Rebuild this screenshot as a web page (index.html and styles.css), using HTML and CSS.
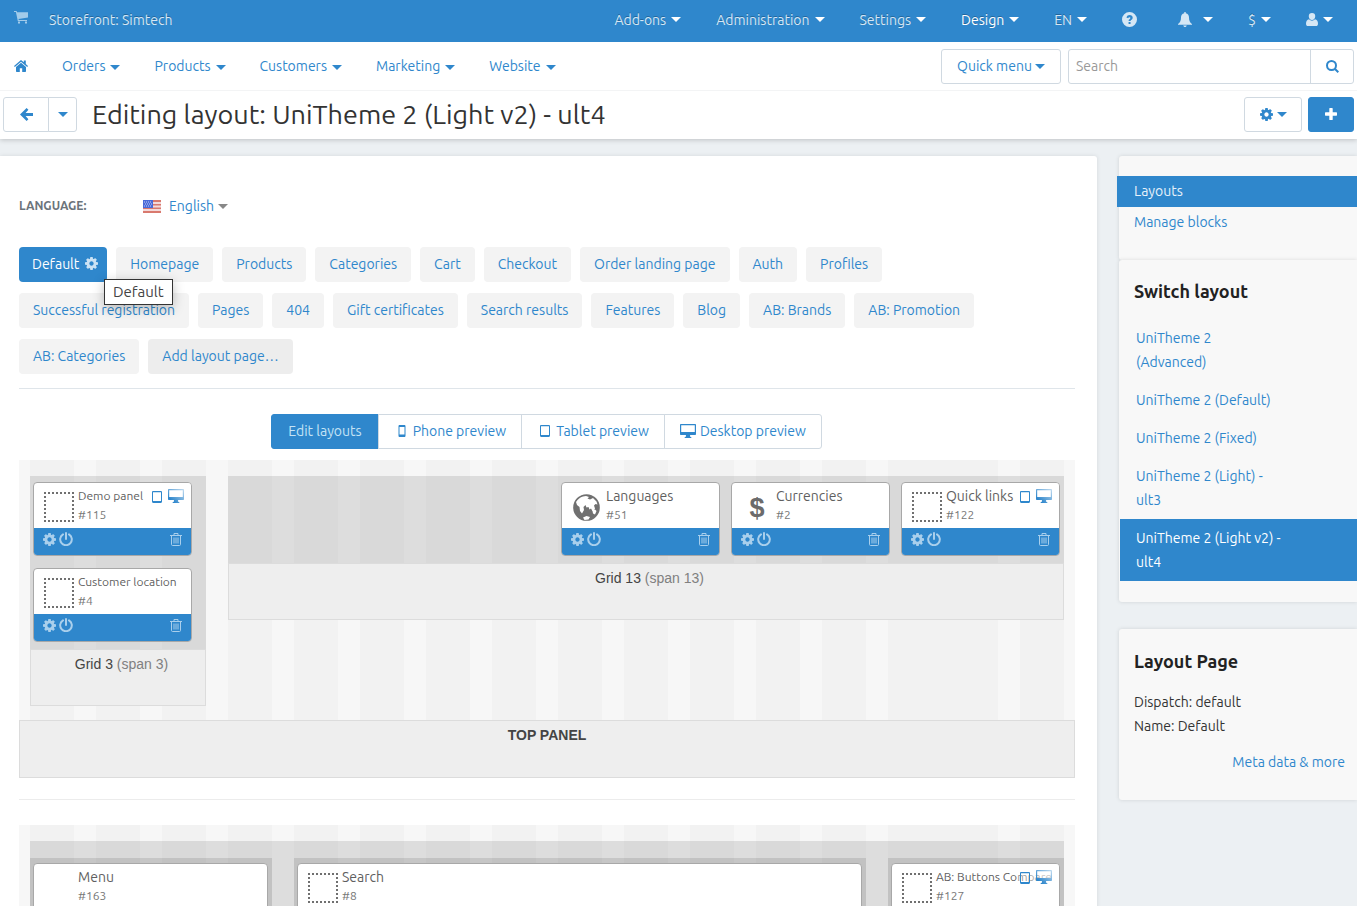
FILE: index.html
```html
<!DOCTYPE html>
<html lang="en">
<head>
<meta charset="utf-8">
<title>Editing layout: UniTheme 2 (Light v2) - ult4</title>
<link rel="stylesheet" href="styles.css">
</head>
<body>
<svg class="sprite" aria-hidden="true">
  <linearGradient id="shine" x1="0" y1="1" x2="1" y2="0"><stop offset=".2" stop-color="#2f87cc"/><stop offset="1" stop-color="#c3dcf0"/></linearGradient>
  <symbol id="cog" viewBox="128 128 1536 1536"><path d="M1152 896q0-106-75-181t-181-75-181 75-75 181 75 181 181 75 181-75 75-181zm512-109v222q0 12-8 23t-20 13l-185 28q-19 54-39 91 35 50 107 138 10 12 10 25t-9 23q-27 37-99 108t-94 71q-12 0-26-9l-138-108q-44 23-91 38-16 136-29 186-7 28-36 28h-222q-14 0-24.500-8.500t-11.500-21.500l-28-184q-49-16-90-37l-141 107q-10 9-25 9-14 0-25-11-126-114-165-168-7-10-7-23 0-12 8-23 15-21 51-66.500t54-70.500q-27-50-41-99l-183-27q-13-2-21-12.500t-8-23.500v-222q0-12 8-23t19-13l186-28q14-46 39-92-40-57-107-138-10-12-10-24 0-10 9-23 26-36 98.500-107.500t94.500-71.500q13 0 26 10l138 107q44-23 91-38 16-136 29-186 7-28 36-28h222q14 0 24.500 8.500t11.500 21.500l28 184q49 16 90 37l142-107q9-9 24-9 13 0 25 10 129 119 165 170 7 8 7 22 0 12-8 23-15 21-51 66.500t-54 70.500q26 50 41 98l183 28q13 2 21 12.500t8 23.500z"/></symbol>
  <symbol id="cart" viewBox="0 0 14 13"><path d="M0 0h2.600l.5 1.200H14v5.300L4.500 8l.3 1H13v1H3.800L1.900 1H0zM4 10.600h2v2H4zM11 10.600h2v2h-2z"/></symbol>
  <symbol id="help" viewBox="0 0 16 16"><path fill-rule="evenodd" d="M8 0a8 8 0 1 1 0 16A8 8 0 0 1 8 0zM4.700 5.800l1.800.9C6.800 6 7.300 5.500 8 5.500c.6 0 1 .3 1 .8 0 1-2 1.200-2 3.200h2.100c0-1.200 2.300-1.400 2.300-3.500C11.400 4.200 10 3.200 8.200 3.200 6.600 3.200 5.300 4.100 4.700 5.800zM7 10.600v2.100h2.100v-2.100z"/></symbol>
  <symbol id="bell" viewBox="0 0 14 15"><path d="M6.300 0h1.400v1.200C10 1.600 11 3.300 11 5.500c0 3.500 1.100 5.200 3 6.500v.8H0V12c1.900-1.300 3-3 3-6.500 0-2.200 1-3.900 3.300-4.300zM5.200 13.500h3.600c-.2.900-.9 1.500-1.800 1.500s-1.600-.6-1.800-1.500z"/></symbol>
  <symbol id="user" viewBox="0 0 12 13"><path d="M6 0a3.200 3.200 0 0 1 3.200 3.400C9.200 5.300 7.800 7 6 7S2.800 5.300 2.800 3.400A3.200 3.200 0 0 1 6 0zM3 6.300c1.600 1.900 4.400 1.900 6 0 2 .3 3 2 3 4.400 0 1.400-.8 2.300-2 2.300H2c-1.200 0-2-.9-2-2.300 0-2.400 1-4.100 3-4.400z"/></symbol>
  <symbol id="home" viewBox="0 0 14 12"><path d="M7 2.700L12 7v4.300c0 .4-.3.700-.7.700H8.200V8.300H5.800V12H2.700c-.4 0-.7-.3-.7-.7V7zM7 0l2.800 2.300V.6h2v3.500L14 6l-.8.900L7 1.700.8 6.900 0 6z"/></symbol>
  <symbol id="left" viewBox="0 0 13 13"><path d="M6.600 0l1.800 1.800L5.600 5H13v3H5.600l2.800 3.200L6.600 13 0 6.500z"/></symbol>
  <symbol id="search" viewBox="0 0 13 13"><path fill="none" stroke="currentColor" stroke-width="2" d="M5.500 1a4.500 4.500 0 1 1 0 9 4.500 4.500 0 0 1 0-9zM8.800 8.800l3.500 3.500"/></symbol>
  <symbol id="plus" viewBox="0 0 12 12"><path d="M4.300.6c0-.4.200-.6.600-.6h2.200c.4 0 .6.200.6.600v3.700h3.700c.4 0 .6.200.6.600v2.200c0 .4-.2.600-.6.600H7.700v3.700c0 .4-.2.600-.6.600H4.900c-.4 0-.6-.2-.6-.6V7.700H.6c-.4 0-.6-.2-.6-.6V4.900c0-.4.2-.6.600-.6h3.700z"/></symbol>
  <symbol id="phone" viewBox="0 0 8 12"><path fill-rule="evenodd" d="M1.500 0h5C7 0 7.500.5 7.500 1v10c0 .5-.5 1-1 1h-5c-.5 0-1-.5-1-1V1c0-.5.5-1 1-1zM1.500 2v7.500h5V2z"/></symbol>
  <symbol id="tablet" viewBox="0 0 10 12"><path fill-rule="evenodd" d="M1.200 0h7.600C9.500 0 10 .5 10 1.200v9.600c0 .7-.5 1.200-1.200 1.200H1.200C.5 12 0 11.500 0 10.800V1.200C0 .5.500 0 1.200 0zM1 1.200V10h8V1.200z"/></symbol>
  <symbol id="desktop" viewBox="0 0 16 14"><path fill-rule="evenodd" d="M1 0h14c.6 0 1 .4 1 1v9c0 .6-.4 1-1 1h-5l.3 2h1v1H4.700v-1h1L6 11H1c-.6 0-1-.4-1-1V1c0-.6.400-1 1-1zM1.200 1.200v6.900h13.600V1.200z"/></symbol>
  <symbol id="power" viewBox="0 0 14 14"><path fill="none" stroke="currentColor" stroke-width="2" stroke-linecap="round" d="M4 2.400a5.800 5.800 0 1 0 6 0M7 1v6"/></symbol>
  <symbol id="trash" viewBox="0 0 12 13"><path fill="none" stroke="currentColor" d="M0 2.500h12M4 2.500v-2h4v2M1.500 2.500v9c0 .6.400 1 1 1h7c.6 0 1-.4 1-1v-9M4 4.500v6M6 4.500v6M8 4.500v6"/></symbol>
  <symbol id="frame" viewBox="0 0 30 30"><path fill="none" stroke="currentColor" stroke-width="2" stroke-dasharray="2 2" shape-rendering="crispEdges" d="M0 1h30M0 29h30M1 0v30M29 0v30"/></symbol>
  <symbol id="globe" viewBox="0 0 27 27"><circle cx="13.500" cy="13.500" r="13.300"/><path fill="#fff" d="M3 8c2-3 4-4.500 7-5.500l3-.5 3 1-1.500 1.500 2.500 1 3-1.500 3.500 3.500 1 3-2-.5-1.500 1.500 1 3-2 3.500-2-3.500-1.500 1-1-2.500-2 .5-1-2.500-2 2 .5 3-2 3.500-2-2.500-.5-4L4 11zM19.500 17l2.500-1.500 1.500 1.500-1.500 3.500-2-1zM10 23.500l3.500-1.500 3.500 1-1.500 2.500-4 .5z"/></symbol>
  <symbol id="flag" viewBox="0 0 18 13"><path fill="#f3dada" d="M0 0h18v13H0z"/><path fill="#d9796e" d="M0 0h18v2H0zM0 4h18v1.500H0zM0 7.500h18V9H0zM0 11h18v2H0z"/><path fill="#4a6ad8" d="M0 0h10v8H0z"/><path stroke="#c5cff5" stroke-dasharray="1 1" d="M1 2h8M2 4h7M1 6h8"/></symbol>
</svg>

<header class="header">
  <div class="topbar">
    <a class="store" href="#"><svg class="i-cart"><use href="#cart"/></svg><span>Storefront: Simtech</span></a>
    <nav class="topnav" aria-label="Settings">
      <a href="#">Add-ons<i class="caret"></i></a>
      <a href="#">Administration<i class="caret"></i></a>
      <a href="#">Settings<i class="caret"></i></a>
      <a class="current" href="#">Design<i class="caret"></i></a>
      <a href="#">EN<i class="caret"></i></a>
      <a href="#" aria-label="Help"><svg class="i-help"><use href="#help"/></svg></a>
      <a class="bell" href="#" aria-label="Notifications"><svg class="i-bell"><use href="#bell"/></svg><i class="caret"></i></a>
      <a href="#">$<i class="caret"></i></a>
      <a href="#" aria-label="Account"><svg class="i-user"><use href="#user"/></svg><i class="caret"></i></a>
    </nav>
  </div>
  <div class="menubar">
    <nav class="mainnav" aria-label="Main">
      <a href="#" aria-label="Home"><svg class="i-home"><use href="#home"/></svg></a>
      <a href="#">Orders<i class="caret"></i></a>
      <a href="#">Products<i class="caret"></i></a>
      <a href="#">Customers<i class="caret"></i></a>
      <a href="#">Marketing<i class="caret"></i></a>
      <a href="#">Website<i class="caret"></i></a>
    </nav>
    <button class="btn quick" type="button">Quick menu<i class="caret"></i></button>
    <form class="search">
      <input type="text" placeholder="Search" aria-label="Search">
      <button type="button" aria-label="Find"><svg class="i-13"><use href="#search"/></svg></button>
    </form>
  </div>
  <div class="titlebar">
    <div class="back">
      <button class="btn" type="button" aria-label="Back"><svg class="i-13"><use href="#left"/></svg></button>
      <button class="btn" type="button" aria-label="History"><i class="caret"></i></button>
    </div>
    <h1>Editing layout: UniTheme 2 (Light v2) - ult4</h1>
    <button class="btn tools" type="button" aria-label="Tools"><svg class="i-13"><use href="#cog"/></svg><i class="caret"></i></button>
    <button class="btn add" type="button" aria-label="Add"><svg class="i-12"><use href="#plus"/></svg></button>
  </div>
</header>

<div class="page">
  <main class="content">
    <div class="language">
      <span class="language-label">Language:</span>
      <a href="#"><svg class="i-flag"><use href="#flag"/></svg>English<i class="caret"></i></a>
    </div>

    <nav class="tabs" aria-label="Layout pages">
      <a class="tab active" href="#">Default<svg class="i-13"><use href="#cog"/></svg><span class="tooltip" role="tooltip">Default</span></a>
      <a class="tab" href="#">Homepage</a>
      <a class="tab" href="#">Products</a>
      <a class="tab" href="#">Categories</a>
      <a class="tab" href="#">Cart</a>
      <a class="tab" href="#">Checkout</a>
      <a class="tab" href="#">Order landing page</a>
      <a class="tab" href="#">Auth</a>
      <a class="tab" href="#">Profiles</a>
      <a class="tab" href="#">Successful registration</a>
      <a class="tab" href="#">Pages</a>
      <a class="tab" href="#">404</a>
      <a class="tab" href="#">Gift certificates</a>
      <a class="tab" href="#">Search results</a>
      <a class="tab" href="#">Features</a>
      <a class="tab" href="#">Blog</a>
      <a class="tab" href="#">AB: Brands</a>
      <a class="tab" href="#">AB: Promotion</a>
      <a class="tab" href="#">AB: Categories</a>
      <a class="tab new" href="#">Add layout page…</a>
    </nav>

    <div class="preview">
      <button class="active" type="button">Edit layouts</button>
      <button type="button"><svg class="i-phone"><use href="#phone"/></svg>Phone preview</button>
      <button type="button"><svg class="i-tablet"><use href="#tablet"/></svg>Tablet preview</button>
      <button type="button"><svg class="i-desktop"><use href="#desktop"/></svg>Desktop preview</button>
    </div>

    <section class="container">
      <div class="columns">
        <div class="grid span3">
          <div class="blocks stacked">
            <article class="block">
              <div class="head"><svg class="i-frame"><use href="#frame"/></svg><div><h3 class="small">Demo panel</h3><p>#115</p></div>
                <span class="devices"><svg class="i-tablet"><use href="#tablet"/></svg><svg class="i-desktop"><use href="#desktop"/></svg></span></div>
              <div class="actions"><button type="button" aria-label="Settings"><svg class="i-13"><use href="#cog"/></svg></button><button type="button" aria-label="Disable"><svg class="i-14"><use href="#power"/></svg></button><button class="del" type="button" aria-label="Delete"><svg class="i-trash"><use href="#trash"/></svg></button></div>
            </article>
            <article class="block">
              <div class="head"><svg class="i-frame"><use href="#frame"/></svg><div><h3 class="small">Customer location</h3><p>#4</p></div></div>
              <div class="actions"><button type="button" aria-label="Settings"><svg class="i-13"><use href="#cog"/></svg></button><button type="button" aria-label="Disable"><svg class="i-14"><use href="#power"/></svg></button><button class="del" type="button" aria-label="Delete"><svg class="i-trash"><use href="#trash"/></svg></button></div>
            </article>
          </div>
          <div class="grid-label">Grid 3 <span>(span 3)</span></div>
        </div>
        <div class="grid span13">
          <div class="blocks inline">
            <article class="block">
              <div class="head"><svg class="i-globe"><use href="#globe"/></svg><div><h3>Languages</h3><p>#51</p></div></div>
              <div class="actions"><button type="button" aria-label="Settings"><svg class="i-13"><use href="#cog"/></svg></button><button type="button" aria-label="Disable"><svg class="i-14"><use href="#power"/></svg></button><button class="del" type="button" aria-label="Delete"><svg class="i-trash"><use href="#trash"/></svg></button></div>
            </article>
            <article class="block">
              <div class="head"><span class="dollar" aria-hidden="true">$</span><div><h3>Currencies</h3><p>#2</p></div></div>
              <div class="actions"><button type="button" aria-label="Settings"><svg class="i-13"><use href="#cog"/></svg></button><button type="button" aria-label="Disable"><svg class="i-14"><use href="#power"/></svg></button><button class="del" type="button" aria-label="Delete"><svg class="i-trash"><use href="#trash"/></svg></button></div>
            </article>
            <article class="block">
              <div class="head"><svg class="i-frame"><use href="#frame"/></svg><div><h3>Quick links</h3><p>#122</p></div>
                <span class="devices"><svg class="i-tablet"><use href="#tablet"/></svg><svg class="i-desktop"><use href="#desktop"/></svg></span></div>
              <div class="actions"><button type="button" aria-label="Settings"><svg class="i-13"><use href="#cog"/></svg></button><button type="button" aria-label="Disable"><svg class="i-14"><use href="#power"/></svg></button><button class="del" type="button" aria-label="Delete"><svg class="i-trash"><use href="#trash"/></svg></button></div>
            </article>
          </div>
          <div class="grid-label">Grid 13 <span>(span 13)</span></div>
        </div>
      </div>
      <div class="container-label">TOP PANEL</div>
    </section>

    <section class="container">
      <div class="columns nested">
        <div class="blocks span4">
          <article class="block">
            <div class="head"><span class="no-icon"></span><div><h3>Menu</h3><p>#163</p></div></div>
          </article>
        </div>
        <div class="blocks span9">
          <article class="block">
            <div class="head"><svg class="i-frame"><use href="#frame"/></svg><div><h3>Search</h3><p>#8</p></div></div>
          </article>
        </div>
        <div class="blocks span3">
          <article class="block">
            <div class="head"><svg class="i-frame"><use href="#frame"/></svg><div><h3 class="small">AB: Buttons Compare</h3><p>#127</p></div>
              <span class="devices"><svg class="i-tablet"><use href="#tablet"/></svg><svg class="i-desktop"><use href="#desktop"/></svg></span></div>
          </article>
        </div>
      </div>
    </section>
  </main>

  <aside class="sidebar">
    <nav class="side-box side-nav" aria-label="Sections">
      <a class="active" href="#">Layouts</a>
      <a href="#">Manage blocks</a>
    </nav>
    <section class="side-box">
      <h2>Switch layout</h2>
      <ul class="layouts">
        <li><a href="#">UniTheme 2 (Advanced)</a></li>
        <li><a href="#">UniTheme 2 (Default)</a></li>
        <li><a href="#">UniTheme 2 (Fixed)</a></li>
        <li><a href="#">UniTheme 2 (Light) - ult3</a></li>
        <li class="active"><a href="#">UniTheme 2 (Light v2) - ult4</a></li>
      </ul>
    </section>
    <section class="side-box info">
      <h2>Layout Page</h2>
      <p>Dispatch: default</p>
      <p>Name: Default</p>
      <a href="#">Meta data &amp; more</a>
    </section>
  </aside>
</div>
</body>
</html>
```
FILE: styles.css
```css
* { box-sizing: border-box; }

body {
  margin: 0;
  background: #ecf0f3;
  color: #333;
  font: 14px/20px "Ubuntu", "Open Sans", sans-serif;
}

a { color: #2f87cc; text-decoration: none; }
h1, h2, h3, p, ul { margin: 0; padding: 0; font-weight: 400; }
svg { fill: currentColor; flex: none; display: block; }
button { font: inherit; color: #2f87cc; cursor: pointer; padding: 0; }

.sprite { position: absolute; width: 0; height: 0; }

.caret {
  display: inline-block;
  flex: none;
  border: 5px solid transparent;
  border-top-color: currentColor;
  border-bottom: 0;
}

.i-12 { width: 12px; height: 12px; }
.i-13 { width: 13px; height: 13px; }
.i-14 { width: 14px; height: 14px; }
.i-cart { width: 14px; height: 13px; }
.i-help { width: 15px; height: 15px; }
.i-bell { width: 14px; height: 15px; }
.i-user { width: 12px; height: 13px; }
.i-home { width: 14px; height: 12px; }
.i-flag { width: 18px; height: 13px; }
.i-phone { width: 8px; height: 12px; }
.i-tablet { width: 10px; height: 12px; }
.i-desktop { width: 16px; height: 14px; }
.i-trash { width: 12px; height: 13px; }
.i-frame { width: 30px; height: 30px; }
.i-globe { width: 27px; height: 27px; }

/* Header */
.header { position: relative; background: #fff; box-shadow: 0 1px 5px rgba(0, 0, 0, .2); }

.topbar {
  display: flex;
  justify-content: space-between;
  height: 42px;
  padding: 0 24px 2px 14px;
  background: #2f87cc;
}
.topbar a { display: flex; align-items: center; color: #d5e7f5; text-shadow: 0 -1px 0 rgba(0, 0, 0, .25); }
.store { gap: 21px; }
.store svg { color: #a2cbea; margin-bottom: 6px; }
.topnav { display: flex; gap: 35px; }
.topnav a { gap: 5px; }
.topnav .current { color: #fff; }
.topnav .bell { gap: 11px; padding-left: 6px; }
.topnav .caret { margin-bottom: 2px; color: #fff; }
.topnav svg { margin-bottom: 2px; }

.menubar {
  display: flex;
  align-items: center;
  height: 49px;
  padding: 0 3px 0 14px;
  border-bottom: 1px solid #f3f4f5;
}
.mainnav { display: flex; gap: 34px; margin-right: auto; }
.mainnav a { display: flex; align-items: center; gap: 5px; }
.mainnav .caret { margin-top: 2px; }

.btn {
  display: flex;
  align-items: center;
  justify-content: center;
  height: 35px;
  background: #fff;
  border: 1px solid #d0d9e1;
  border-radius: 3px;
}
.quick { gap: 3px; width: 120px; margin-right: 7px; }
.search { display: flex; width: 286px; height: 35px; border: 1px solid #d0d9e1; border-radius: 3px; }
.search input {
  flex: 1;
  min-width: 0;
  padding: 0 7px;
  border: 0;
  background: none;
  font: inherit;
}
.search input::placeholder { color: #999; opacity: 1; }
.search button {
  display: flex;
  align-items: center;
  justify-content: center;
  width: 43px;
  background: none;
  border: 0;
  border-left: 1px solid #d0d9e1;
}

.titlebar { display: flex; align-items: center; height: 48px; padding: 0 3px 2px; }
.back { display: flex; margin-right: 15px; }
.back .btn { width: 46px; border-radius: 3px 0 0 3px; }
.back .btn + .btn { width: 29px; margin-left: -1px; border-radius: 0 3px 3px 0; }
h1 { margin-right: auto; font-size: 27px; line-height: 32px; }
.tools { gap: 4px; width: 58px; margin-right: 6px; }
.add { width: 46px; color: #fff; background: #2f87cc; border-color: #2f87cc; }

/* Page */
.page {
  display: grid;
  grid-template-columns: minmax(0, 1fr) 238px;
  gap: 22px;
  align-items: start;
  margin-top: 17px;
}
.content {
  padding: 40px 22px 0 19px;
  background: #fff;
  border-radius: 0 3px 0 0;
  box-shadow: 0 0 4px rgba(0, 0, 0, .1);
}

.language { display: flex; align-items: center; margin-bottom: 31px; }
.language-label { width: 124px; color: #6b747b; font-size: 12px; font-weight: 700; text-transform: uppercase; }
.language a { display: flex; align-items: center; }
.language svg { margin-right: 8px; }
.language .caret { margin-left: 4px; color: #888; }

.tabs {
  display: flex;
  flex-wrap: wrap;
  gap: 11px 9px;
  padding: 0 54px 14px 0;
  border-bottom: 1px solid #dfe5ea;
}
.tab {
  position: relative;
  display: flex;
  align-items: center;
  height: 35px;
  padding: 0 14px 2px;
  background: #f3f3f3;
  border-radius: 4px;
}
.tab.new { background: #ededed; }
.tab.active { gap: 6px; padding-left: 13px; padding-right: 9px; color: #fff; background: #2f87cc; }
.tab.active svg { color: #cbe2f4; }
.tooltip {
  position: absolute;
  z-index: 2;
  top: 32px;
  left: 85px;
  padding: 2px 8px;
  color: #444;
  font-size: 15px;
  background: #fff;
  border: 1px solid #333;
  box-shadow: 0 3px 12px rgba(0, 0, 0, .25);
}

.preview { display: flex; justify-content: center; margin: 25px 0 11px; }
.preview button {
  display: flex;
  align-items: center;
  height: 35px;
  margin-left: -1px;
  padding: 0 15px 2px;
  background: #fff;
  border: 1px solid #d0d9e1;
}
.preview button:last-child { border-radius: 0 3px 3px 0; }
.preview .active { padding: 0 16px 2px; color: #c4e3f5; background: #2f87cc; border-color: #2f87cc; border-radius: 3px 0 0 3px; }
.preview .i-phone { margin: 0 7px 0 4px; }
.preview .i-tablet { margin: 0 6px 0 3px; }
.preview .i-desktop { margin-right: 4px; }

/* Layout containers, drawn over a 16-column stripe pattern */
.container {
  margin-bottom: 21px;
  background:
    linear-gradient(#f2f2f2, #f2f2f2) 88.300% 0 / 22px 100% no-repeat,
    linear-gradient(90deg, #f7f7f7 16.660%, #f2f2f2 16.660% 83.330%, #f7f7f7 83.330%) 0 0 / 6.250% 100%;
}
.container + .container { border-top: 1px solid #ececec; padding-top: 25px; background-clip: content-box; background-origin: content-box; }
.columns {
  display: grid;
  grid-template-columns: repeat(16, minmax(0, 1fr));
  column-gap: 22px;
  align-items: start;
  padding: 16px 11px 14px;
}
.span3 { grid-column: span 3; }
.span4 { grid-column: span 4; }
.span9 { grid-column: span 9; }
.span13 { grid-column: span 13; }

.blocks { background: rgba(0, 0, 0, .1); }
.stacked { display: grid; gap: 12px; padding: 6px 14px 7px 3px; }
.inline { display: flex; justify-content: flex-end; gap: 11px; padding: 6px 4px 7px; }
.inline .block { flex: 0 1 159px; }

.grid-label, .container-label {
  height: 57px;
  padding-top: 4px;
  background: #eee;
  border: 1px solid #dcdcdc;
  color: #444;
  font-family: "Liberation Sans", Arial, sans-serif;
  text-align: center;
}
.grid-label { padding-left: 7px; }
.grid-label span { color: #808080; }
.container-label { height: 58px; font-weight: 700; }

.nested { position: relative; padding-top: 33px; padding-bottom: 0; }
.nested::before {
  content: "";
  position: absolute;
  inset: 16px 11px 0;
  background: rgba(0, 0, 0, .1);
}
.nested .blocks { position: relative; padding: 5px 4px 0 3px; }

.block {
  overflow: hidden;
  min-width: 0;
  background: #fff;
  border: 1px solid #a8a8a8;
  border-radius: 4px;
}
.head { position: relative; display: flex; height: 45px; padding-left: 10px; color: #707070; }
.head > div { min-width: 0; margin-left: 4px; padding-top: 3px; white-space: nowrap; }
.head h3 { color: #5f5f5f; font-size: 14px; line-height: 20px; }
.head h3.small { font-size: 12px; }
.head p { font-size: 12px; line-height: 18px; color: #777; }
.head .i-frame { margin-top: 9px; }
.head .i-globe { margin: 11px 2px 0 1px; }
.no-icon { width: 30px; }
.dollar {
  width: 30px;
  padding-top: 10px;
  color: #6b6b6b;
  font: 700 27px/30px "Liberation Sans", Arial, sans-serif;
  text-align: center;
}
.devices { position: absolute; z-index: 1; top: 6px; right: 7px; display: flex; gap: 6px; color: #2f87cc; }
.devices .i-tablet { margin-top: 2px; }
.devices .i-desktop { fill: url(#shine); }
.head:has(.devices)::after {
  content: "";
  position: absolute;
  inset: 0 0 0 auto;
  width: 41px;
  background: linear-gradient(90deg, rgba(255, 255, 255, .3), rgba(255, 255, 255, .8));
}

.actions {
  display: flex;
  gap: 3px;
  height: 27px;
  padding: 4px 9px;
  background: #2f87cc;
}
.actions button { display: flex; align-items: center; height: 14px; background: none; border: 0; color: #a9cfec; }
.actions .del { margin-left: auto; }

/* Sidebar */
.side-box {
  padding: 19px 15px 20px;
  background: #f8f8f8;
  border-radius: 3px 0 0 3px;
  box-shadow: 0 0 4px rgba(0, 0, 0, .12);
}
.side-nav { height: 104px; padding: 20px 0; }
.side-nav a { display: block; padding: 5px 15px 6px; }
.side-nav .active { margin-left: -2px; padding-left: 17px; color: #e8f2fa; background: #2f87cc; }
h2 { color: #222; font-size: 18px; line-height: 24px; font-weight: 700; }
.layouts { margin: 16px -15px 1px; list-style: none; }
.layouts li { margin-left: 1px; padding: 7px 74px 7px 16px; line-height: 24px; }
.layouts .active { background: #2f87cc; }
.layouts .active a { color: #fff; }
.info { margin-top: 27px; padding: 20px 12px 28px 15px; }
.info h2 { margin-bottom: 17px; }
.info p { line-height: 24px; }
.info a { display: block; margin-top: 14px; text-align: right; }
```
